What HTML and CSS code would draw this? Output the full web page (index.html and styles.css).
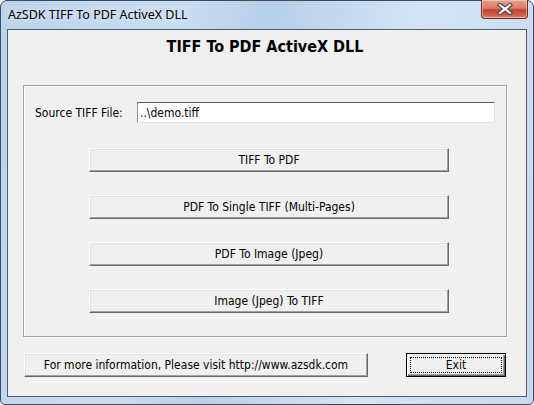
FILE: index.html
```html
<!DOCTYPE html>
<html>
<head>
    <title>AzSDK TIFF To PDF ActiveX DLL</title>
    <link rel="stylesheet" href="styles.css">
</head>
<body>
    <div class="window">
        <div class="titlebar">
            <span class="caption">AzSDK TIFF To PDF ActiveX DLL</span>
            <button class="close-btn" title="Close">
                <svg width="16" height="12" viewBox="0 0 16 12">
                    <path d="M3 2 L13 10 M13 2 L3 10" stroke="#3b3b4a" stroke-width="4.2" stroke-linecap="square"/>
                    <path d="M3 2 L13 10 M13 2 L3 10" stroke="#ffffff" stroke-width="2.2" stroke-linecap="square"/>
                </svg>
            </button>
        </div>
        <div class="client">
            <h1>TIFF To PDF ActiveX DLL</h1>
            <div class="group">
                <div class="source-row">
                    <label for="source">Source TIFF File:</label>
                    <input type="text" id="source" value="..\demo.tiff">
                </div>
                <div class="actions">
                    <button class="btn">TIFF To PDF</button>
                    <button class="btn">PDF To Single TIFF (Multi-Pages)</button>
                    <button class="btn">PDF To Image (Jpeg)</button>
                    <button class="btn">Image (Jpeg) To TIFF</button>
                </div>
            </div>
            <div class="footer">
                <button class="btn info-btn">For more information, Please visit http://www.azsdk.com</button>
                <button class="btn exit-btn"><span class="focus">Exit</span></button>
            </div>
        </div>
    </div>
</body>
</html>
```

FILE: styles.css
```css
body {
    margin: 0;
    background-color: #ffffff;
    font-family: "DejaVu Sans Condensed", "DejaVu Sans", sans-serif;
}

.window {
    width: 532px;
    height: 403px;
    border: 1px solid #3f4b59;
    border-radius: 7px 7px 5px 5px;
    background: linear-gradient(100deg, #bcd3ec 0%, #c9ddf2 30%, #b7cfe9 45%, #d3e4f6 70%, #c6daf0 100%);
}

.titlebar {
    height: 28px;
    display: flex;
    justify-content: space-between;
    align-items: flex-start;
}

.caption {
    font-family: "Noto Sans", "Open Sans", sans-serif;
    font-size: 12.5px;
    color: #000;
    padding: 5px 0 0 7px;
    text-shadow: 0 0 6px rgba(255, 255, 255, 0.9);
}

.close-btn {
    width: 47px;
    height: 19px;
    margin: -1px 5px 0 0;
    padding: 0;
    border: 1px solid #6b2b25;
    border-top: none;
    border-radius: 0 0 4px 4px;
    background: linear-gradient(to bottom, #e8a493 0%, #d77b66 45%, #c0432e 55%, #d2604a 85%, #e08d70 100%);
    box-shadow: inset 0 0 0 1px rgba(255, 220, 210, 0.5);
    display: flex;
    align-items: center;
    justify-content: center;
}

.client {
    margin: 0 6px 0 6px;
    height: 366px;
    border: 1px solid #4e5d6e;
    background-color: #f0f0f0;
    padding: 0 19px 0 15px;
}

h1 {
    margin: 0;
    height: 34px;
    line-height: 34px;
    font-size: 16px;
    font-weight: bold;
    text-align: center;
    color: #000;
}

.group {
    margin-top: 21px;
    height: 250px;
    border: 1px solid #a0a0a0;
    box-shadow: inset 1px 1px 0 #ffffff, 1px 1px 0 #ffffff;
}

.source-row {
    display: flex;
    align-items: center;
    margin: 16px 11px 0 11px;
}

.source-row label {
    width: 102px;
    font-size: 12px;
    color: #000;
}

.source-row input {
    flex: 1;
    height: 21px;
    box-sizing: border-box;
    border: 1px solid #e3e3e3;
    border-top-color: #646464;
    border-left-color: #8e8e8e;
    padding: 0 2px;
    font-family: inherit;
    font-size: 12px;
    background: #fff;
    outline: none;
}

.actions {
    display: flex;
    flex-direction: column;
    gap: 23px;
    margin: 25px 0 0 65px;
    width: 360px;
}

.btn {
    height: 24px;
    box-sizing: border-box;
    border: 1px solid #ffffff;
    border-right-color: #696969;
    border-bottom-color: #696969;
    box-shadow: inset -1px -1px 0 #a0a0a0, inset 1px 1px 0 #e3e3e3;
    background-color: #f0f0f0;
    font-family: inherit;
    font-size: 12px;
    color: #000;
    padding: 0;
}

.footer {
    display: flex;
    justify-content: space-between;
    margin: 16px 1px 0 1px;
}

.info-btn {
    width: 344px;
}

.exit-btn {
    width: 100px;
    border: 1px solid #000;
    box-shadow: inset 1px 1px 0 #ffffff, inset -1px -1px 0 #696969, inset -2px -2px 0 #a0a0a0;
    padding: 3px;
    display: flex;
}

.exit-btn .focus {
    flex: 1;
    border: 1px dotted #000;
    line-height: 14px;
}
```
